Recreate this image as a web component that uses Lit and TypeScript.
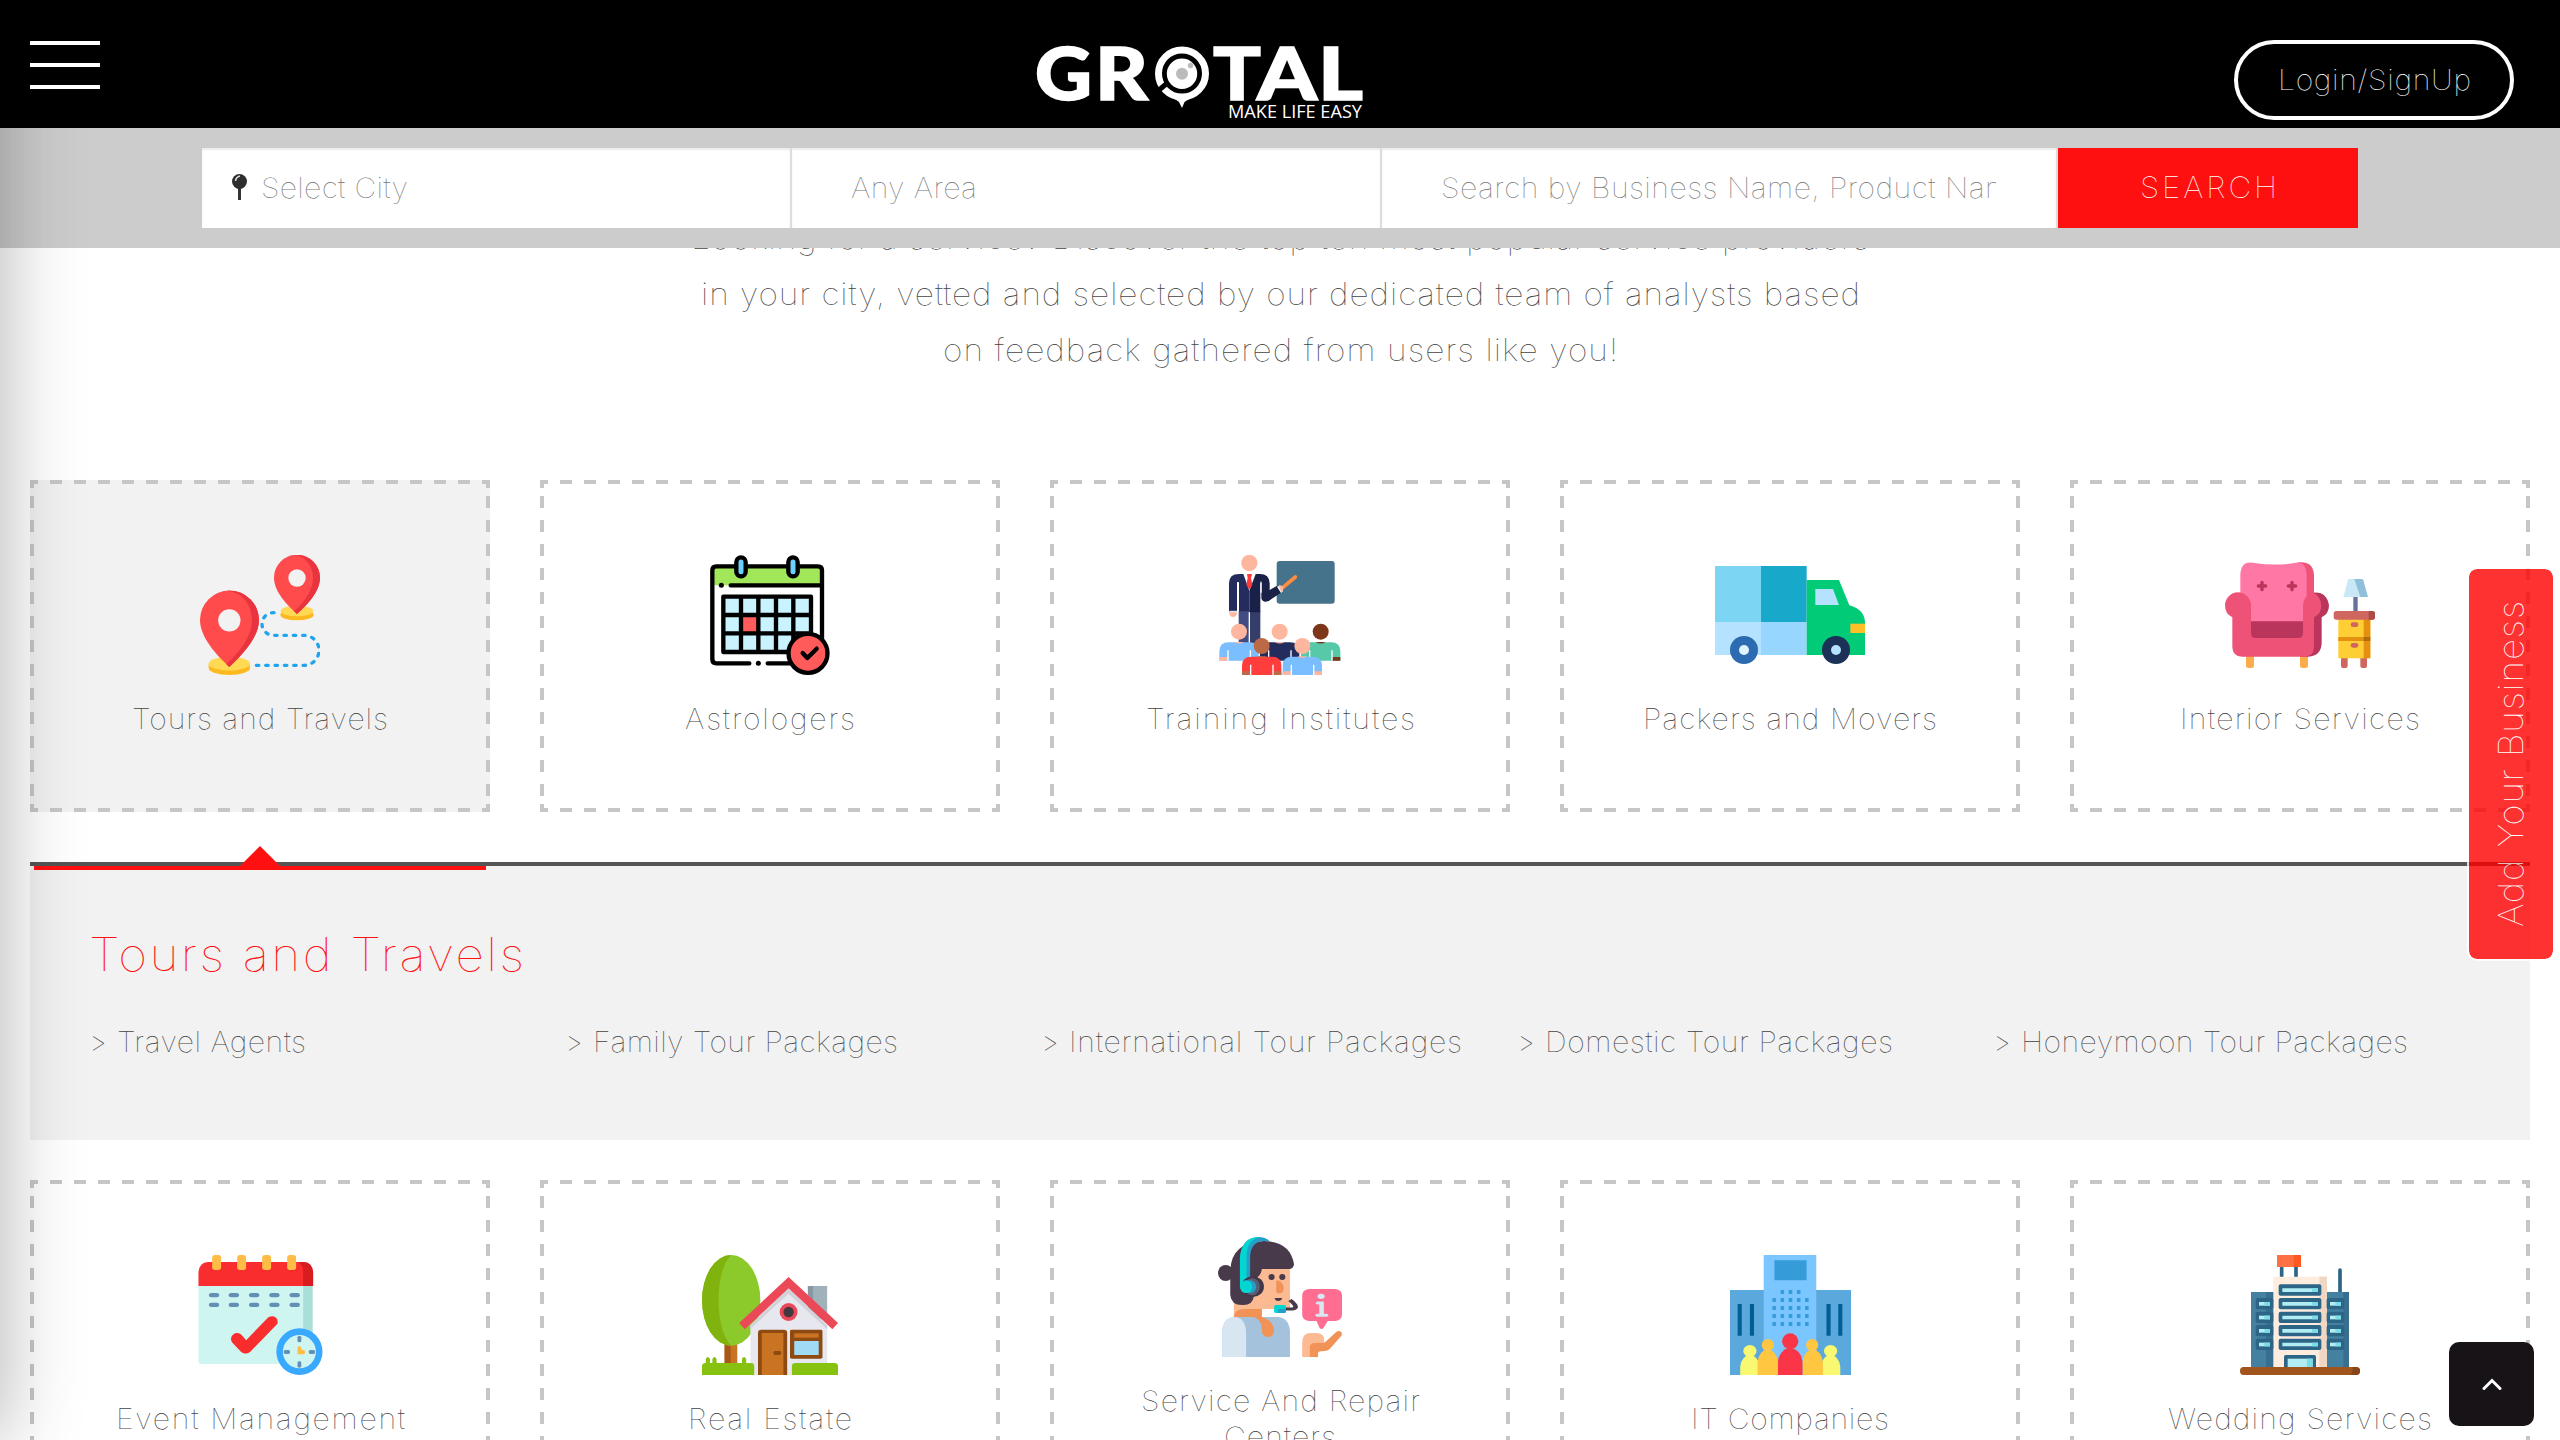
import { LitElement, html, css, svg } from "lit";
import { customElement, property } from "lit/decorators.js";
import { classMap } from "lit/directives/class-map.js";

/** Glyphs are drawn a little wider than the face's own width. */
const STRETCH = 1.08;

/** One line of text, tracked so that it fills a given measure. */
@customElement("tracked-text")
class TrackedText extends LitElement {
  @property() text = "";
  @property({ type: Number }) measure = 0;
  @property({ type: Boolean }) vertical = false;

  static styles = css`
    :host { display: inline-block; white-space: nowrap; }
    .line { display: inline-block; white-space: pre; transform-origin: 0 0; }
  `;

  protected updated() {
    const line = this.renderRoot.querySelector<HTMLElement>(".line")!;
    line.style.letterSpacing = "0px";
    line.style.marginInlineEnd = "0px";
    line.style.transform = "none";
    const box = line.getBoundingClientRect();
    const natural = Math.max(box.width, box.height);
    const tracking = (this.measure / STRETCH - natural) / Math.max(1, this.text.length - 1);
    line.style.letterSpacing = `${tracking}px`;
    line.style.marginInlineEnd = `${this.measure - this.measure / STRETCH - tracking}px`;
    line.style.transform = this.vertical ? `scaleY(${STRETCH})` : `scaleX(${STRETCH})`;
  }

  render() {
    return html`<span class="line">${this.text}</span>`;
  }
}

const toursIcon = svg`<svg width="120" height="120" viewBox="600 285 360 360">
  <path d="M822 458 h-2 a34 34 0 0 0 0 68 H912 a45 45 0 0 1 0 90 H765" fill="none" stroke="#1fa5ee" stroke-width="10" stroke-linecap="round" stroke-dasharray="7.5 20.5"/>
  <ellipse cx="688" cy="624" rx="62" ry="21" fill="#ffb920"/><rect x="626" y="611" width="124" height="13" fill="#ffb920"/>
  <ellipse cx="688" cy="611" rx="62" ry="21" fill="#ffd954"/>
  <ellipse cx="891" cy="464" rx="50" ry="17" fill="#ffb920"/><ellipse cx="891" cy="453" rx="49" ry="16" fill="#ffd954"/>
  <path d="M688 621C650 586 600 532 600 480a88 88 0 0 1 177 0c0 52-51 106-89 141z" fill="#ff4b4b"/>
  <path d="M688 392a88 88 0 0 1 89 88c0 52-51 106-89 141l-9-8c42-40 77-85 77-133 0-45-28-84-76-88z" fill="#e8343f"/>
  <circle cx="688" cy="481" r="33.500" fill="#f2f2f2"/>
  <path d="M891 462c-30-27-69-68-69-109a69 69 0 0 1 138 0c0 41-39 82-69 109z" fill="#ff4b4b"/>
  <path d="M882 285h9a69 69 0 0 1 69 68c0 41-39 82-69 109l-9-8c35-32 57-65 57-101 0-33-22-66-57-68z" fill="#e8343f"/>
  <circle cx="891" cy="354" r="26" fill="#f2f2f2"/>
</svg>`;

const calendarIcon = svg`<svg width="120" height="120" viewBox="150 75 360 360">
  <rect x="157" y="109" width="329" height="291" rx="12" fill="#fff"/>
  <path d="M157 121q0-12 12-12h305q12 0 12 12v45H157z" fill="#a2e65a"/>
  <path d="M268 400H169q-12 0-12-12V121q0-12 12-12h305q12 0 12 12V330M323 400h70M212 166h270" fill="none" stroke="#000" stroke-width="13" stroke-linecap="round"/>
  <circle cx="184" cy="166" r="7.500"/><circle cx="295" cy="400" r="7.500"/>
  <rect x="190" y="200" width="263" height="166" fill="#c8f3ff"/>
  <rect x="246" y="258" width="46" height="50" fill="#ff5b5b"/>
  <path d="M190 200h263v166H190zM243 200v166M295 200v166M348 200v166M400 200v166M190 255h263M190 310h263" fill="none" stroke="#000" stroke-width="13" stroke-linejoin="round"/>
  <g fill="#6cd0ff" stroke="#000" stroke-width="13"><rect x="229" y="82" width="28" height="57" rx="14"/><rect x="385" y="82" width="28" height="57" rx="14"/></g>
  <circle cx="444" cy="370" r="58.500" fill="#ff5b5b" stroke="#000" stroke-width="13"/>
  <path d="M428 369l14 15 28-28" fill="none" stroke="#000" stroke-width="13" stroke-linecap="round" stroke-linejoin="round"/>
</svg>`;

const pupil = (x: number, y: number, skin: string, shirt: string) => svg`
  <path d="M${x - 59} ${y + 87}v-28q0-27 28-27h62q28 0 28 27v28z" fill="${shirt}"/>
  <path d="M${x - 59} ${y + 76}h25v11h-25zM${x + 35} ${y + 76}h24v11h-24z" fill="${skin}"/>
  <path d="M${x - 33} ${y + 56}v31M${x + 34} ${y + 56}v31" stroke="#fff" stroke-width="4"/>
  <circle cx="${x}" cy="${y}" r="24" fill="${skin}"/><path d="M${x - 15} ${y + 31}q15 9 30 0z" fill="${skin}"/>`;

const trainingIcon = svg`<svg width="121.700" height="120" viewBox="178 75 365 360">
  <rect x="351" y="93" width="174" height="128" rx="9" fill="#46738c"/>
  <path d="M237 244h32v100h-32z" fill="#424c83"/><path d="M269 244h33v100h-33z" fill="#343e69"/><path d="M269 246v95" stroke="#fff" stroke-width="4"/>
  <path d="M208 245v-85q0-28 30-28h31v113h-31v-88h-6v88z" fill="#242c5e"/>
  <path d="M269 132h32q28 0 29 28v20l25-14 12 20-40 27q-18 7-22-8v-45h-3v87h-33z" fill="#1a2149"/>
  <path d="M235 157v86M304 155v33" stroke="#fff" stroke-width="4"/>
  <path d="M251 132h37l-19 50z" fill="#fff"/><path d="M262 132h15l-3 12 4 20-9 15-9-15 4-20z" fill="#ff3b3b"/>
  <path d="M209 247h23v3q-2 11-12 11t-11-11z" fill="#ffb69e"/><path d="M209 244h23" stroke="#fff" stroke-width="3"/>
  <path d="M352 170l9-4 9 18-6 5z" fill="#fff"/><path d="M370 172l37-31" stroke="#ff8b3d" stroke-width="11" stroke-linecap="round"/><path d="M357 167q14-3 14 8 0 10-6 13z" fill="#ffb69e"/>
  <circle cx="269" cy="99" r="24.500" fill="#ffb69e"/>
  ${pupil(360, 305, "#ffb69e", "#242c5e")}
  ${pupil(238, 305, "#ffb69e", "#7abeff")}
  ${pupil(483, 305, "#7d361a", "#57c8a8")}
  ${pupil(306, 348, "#bb6a45", "#ff3d3d")}
  ${pupil(428, 348, "#ffb69e", "#7abeff")}
</svg>`;

const truckIcon = svg`<svg width="150" height="120" viewBox="105 75 450 360">
  <path d="M105 108h138v168H105z" fill="#7bd5f3"/><path d="M243 108h137v168H243z" fill="#18a8ca"/>
  <path d="M105 276h138v99H105z" fill="#b5e2ff"/><path d="M243 276h137v99H243z" fill="#97d6ff"/>
  <path d="M380 150h97l31 76q47 12 47 54v95H380z" fill="#02cb77"/>
  <path d="M406 177h53l18 48h-71z" fill="#b5e2ff"/><path d="M511 281h44v28h-44z" fill="#ffbf29"/>
  <circle cx="192" cy="360" r="42" fill="#2d6bb0"/><circle cx="192" cy="360" r="15" fill="#dff3ff"/>
  <circle cx="468" cy="360" r="42" fill="#1b3157"/><circle cx="468" cy="360" r="15" fill="#b5e2ff"/>
</svg>`;

const interiorIcon = svg`<svg width="150" height="120" viewBox="135 75 450 360">
  <path d="M198 375h24v32q0 7-7 7h-10q-7 0-7-7zM360 375h24v32q0 7-7 7h-10q-7 0-7-7z" fill="#fdac4c"/>
  <path d="M355 97q47-5 47 42v80h-50z" fill="#ee5377"/>
  <path d="M181 280V134q2-42 37-36 75 12 140-1 22 5 22 40v145z" fill="#ff77a5"/>
  <path d="M400 188q40-4 47 38 0 26-22 36v78q-2 38-40 40h-25z" fill="#b9355c"/>
  <path d="M210 274h160v55H210z" fill="#b9355c"/>
  <path d="M135 226a39 39 0 0 1 78 0v84q0 14 14 14h128q14 0 14-14v-80q0-34 31-41 22 8 24 38 0 24-22 35v92q-2 24-26 26H186q-29-2-29-30v-88q-22-10-22-36z" fill="#ee5377"/>
  <path d="M246 157v22M235 168h22M336 157v22M325 168h22" stroke="#b9355c" stroke-width="10" stroke-linecap="round"/>
  <path d="M520 200h13v46h-13z" fill="#69719b"/><path d="M505 147h39l20 54h-74z" fill="#c8e8f7"/><path d="M523 147h21q5 0 6 4l14 50h-23z" fill="#90bfdb"/>
  <path d="M483 383h20v25q0 6-6 6h-8q-6 0-6-6zM541 383h20v25q0 6-6 6h-8q-6 0-6-6z" fill="#cf665f"/>
  <path d="M475 266h96v119h-96z" fill="#ffce34"/><path d="M551 266h20v119h-20zM475 321h96v12h-96z" fill="#e69012"/><path d="M551 321h20v12h-20z" fill="#b06d0e"/>
  <rect x="461" y="243" width="124" height="26" rx="8" fill="#cf665f"/><path d="M566 243h11q8 0 8 8v10q0 8-8 8h-11z" fill="#ad4c46"/>
  <rect x="512" y="277" width="23" height="14" rx="7" fill="#cf665f"/><rect x="512" y="339" width="23" height="14" rx="7" fill="#cf665f"/>
</svg>`;

const eventIcon = svg`<svg width="125" height="120" viewBox="101 105 265 360" preserveAspectRatio="none">
  <path d="M102 198h242v234H107q-5 0-5-7z" fill="#cff5f0"/><path d="M324 198h20v160h-20z" fill="#a8e0d9"/>
  <path d="M102 198v-42q2-28 20-30h203q18 2 20 30v42z" fill="#fa2d2e"/><path d="M312 126h13q18 2 20 30v42h-21v-46q-1-20-12-26z" fill="#d81c20"/>
  <g fill="#ffbc47">${[131, 184, 237, 290].map((x) => svg`<rect x="${x}" y="105" width="19" height="45" rx="6" ry="8"/>`)}</g>
  <g fill="#638fb5">${[124, 166, 209, 252, 295].map((x) => svg`<rect x="${x}" y="219" width="22" height="13" rx="5" ry="6"/><rect x="${x}" y="248" width="22" height="13" rx="5" ry="6"/>`)}</g>
  <path d="M171 358c0-18 15-26 23-12l9 15 44-65c10-16 27-4 22 16l-57 83q-10 11-20 0l-18-27q-3-5-3-10z" fill="#fa2d2e"/>
  <ellipse cx="316" cy="395" rx="49" ry="70" fill="#39a9ff"/><ellipse cx="316" cy="395" rx="35" ry="50" fill="#cff5f0"/>
  <g fill="#638fb5"><rect x="312" y="348" width="8" height="19" rx="4"/><rect x="312" y="424" width="8" height="19" rx="4"/><rect x="283" y="390" width="13" height="12" rx="4"/><rect x="336" y="390" width="13" height="12" rx="4"/></g>
  <path d="M312 382q4-6 8 0v8h6q4 6 0 13h-14z" fill="#ffbc47"/>
</svg>`;

const estateIcon = svg`<svg width="136" height="120" viewBox="1169 105 289 360" preserveAspectRatio="none">
  <path d="M1217 370h27v60h-27z" fill="#c97423"/><path d="M1217 370h13v60h-13z" fill="#a75718"/>
  <ellipse cx="1231" cy="241" rx="62" ry="136" fill="#8cc92a"/>
  <path d="M1231 105a62 136 0 0 0 0 272c-36-50-36-222 0-272z" fill="#80b30d"/>
  <path d="M1394 198h41v100h-41z" fill="#a0b1ba"/><path d="M1394 198h11v80h-11z" fill="#8699a3"/>
  <path d="M1353 205l82 115v145h-163V320z" fill="#e7e8ef"/>
  <path d="M1353 204l82 112v12l-82-107-82 107v-12z" fill="#d2d3d9"/>
  <path d="M1353 171l105 138-12 19-93-123-93 123-12-19z" fill="#eb4858"/>
  <ellipse cx="1353" cy="276" rx="19" ry="27" fill="#eb4858"/><ellipse cx="1353" cy="276" rx="11" ry="16" fill="#433840"/>
  <path d="M1169 465v-26q0-10 8-10v-12q4-12 9 0v12h5v-12q5-12 9 0v12h54v-12q4-12 9 0v12h10q7 0 7 10v26zM1360 465v-26q0-10 8-10h82q8 0 8 10v26z" fill="#86c20f"/>
  <path d="M1288 465V338q0-9 7-9h48q7 0 7 9v127z" fill="#8e4a11"/><path d="M1296 339h46v126h-46z" fill="#c97423"/><rect x="1321" y="393" width="16" height="12" rx="4" fill="#8e4a11"/>
  <rect x="1356" y="329" width="69" height="87" rx="4" fill="#8e4a11"/><path d="M1365 340h52v13h-52z" fill="#c97423"/><path d="M1365 363h52v42h-52z" fill="#a0dbf5"/>
</svg>`;

const supportIcon = svg`<svg width="124" height="120" viewBox="192 81 243 360" preserveAspectRatio="none">
  <ellipse cx="207" cy="189" rx="15" ry="24" fill="#483a4b"/>
  <path d="M223 260h55v75h-55z" fill="#fbba91"/><path d="M223 325q0-28 22-28h33v30z" fill="#f19357"/>
  <path d="M254 170h79v127h-79z" fill="#fbba91"/>
  <path d="M216 180q3-84 66-87 52 2 59 70-1 14-10 14h-53q-2 25-16 28v55q-2 24-20 25-24 2-26-30z" fill="#483a4b"/>
  <path d="M235 226V142q4-60 36-61 14 0 22 12h-12q-24 2-26 45v100z" fill="#249fc9"/>
  <path d="M235 230V142q4-60 36-61h4q-26 8-27 56v95z" fill="#03d6d2"/>
  <ellipse cx="260" cy="230" rx="22" ry="31" fill="#413649"/><ellipse cx="259" cy="230" rx="15" ry="26" fill="#5b5e71"/><ellipse cx="254" cy="230" rx="13" ry="19" fill="#249fc9"/><ellipse cx="247" cy="230" rx="12" ry="19" fill="#03d6d2"/>
  <ellipse cx="297" cy="201" rx="6" ry="9" fill="#483a4b"/><ellipse cx="318" cy="201" rx="6" ry="9" fill="#483a4b"/>
  <path d="M306 212q11-4 15 22 0 16-9 16-6 0-6-8z" fill="#f19357"/><path d="M303 264h15q-2 9-8 9t-7-9z" fill="#483a4b"/>
  <path d="M333 270q20 24 4 27h-14" fill="none" stroke="#483a4b" stroke-width="9"/>
  <rect x="302" y="285" width="23" height="24" rx="4" fill="#03d6d2"/><path d="M310 297h15v8q0 4-4 4h-11z" fill="#249fc9"/>
  <path d="M200 441v-78q2-40 26-42h82q23 2 25 42v78z" fill="#a5c2dc"/><path d="M200 441v-78q2-40 24-42 21 2 23 42v78z" fill="#d7e6f1"/>
  <path d="M262 321h16q24 10 24 46-3 14-12 14t-12-14q1-38-16-46z" fill="#f19357"/>
  <path d="M370 237h52q13 2 13 20v56q0 18-13 20h-15l-8 20q-4 8-8 0l-6-20h-15q-13-2-13-20v-56q0-18 13-20z" fill="#ff6d90"/>
  <ellipse cx="394" cy="259" rx="7" ry="8" fill="#d7e6f1"/><path d="M388 279h7v36M387 316h17" fill="none" stroke="#d7e6f1" stroke-width="9" stroke-linecap="round"/>
  <path d="M357 441v-45q1-27 16-27h13q14 2 14 20v52z" fill="#fbba91"/><path d="M400 365h30v76h-42v-17h12z" fill="#fff"/>
  <path d="M372 441v-28q0-14 10-14h15q4 0 7-5l18-26q6-10 12-1 2 6-1 12l-22 38q-4 6-10 6h-6q-7 1-7 8v10z" fill="#f19357"/>
</svg>`;

const windowDots = [294, 310, 326].map((x) => svg`<rect x="${x}" y="240" width="7" height="12"/>`);
const windowGrid = [264, 288, 312, 336].map((y) => [278, 294, 310, 326, 342].map((x) => svg`<rect x="${x}" y="${y}" width="7" height="12"/>`));

const officeIcon = svg`<svg width="121" height="120" viewBox="195 135 237 360" preserveAspectRatio="none">
  <path d="M195 240h237v255H195z" fill="#5ba8dd"/><path d="M261 135h103v360H261z" fill="#7cc6ff"/><path d="M282 151h63v60h-63z" fill="#359cd9"/>
  <g fill="#359cd9">${windowDots}${windowGrid}</g>
  <path d="M214 282v95M238 282v95M388 282v95M411 282v95" stroke="#005f92" stroke-width="8"/>
  <g fill="#f9f871"><ellipse cx="234" cy="423" rx="13" ry="18"/><path d="M215 495v-25q2-32 19-36 17 4 19 36v25z"/><ellipse cx="392" cy="423" rx="13" ry="18"/><path d="M373 495v-25q2-32 19-36 17 4 19 36v25z"/></g>
  <g fill="#ffc642"><ellipse cx="269" cy="405" rx="12" ry="18"/><path d="M249 495v-38q2-34 20-39 18 5 20 39v38z"/><ellipse cx="356" cy="405" rx="12" ry="18"/><path d="M337 495v-38q2-34 20-39 18 5 20 39v38z"/></g>
  <g fill="#fa3548"><ellipse cx="313" cy="394" rx="16" ry="24"/><path d="M289 495v-40q2-36 24-42 22 6 24 42v40z"/></g>
</svg>`;

const hotelIcon = svg`<svg width="120" height="120" viewBox="330 105 360 360">
  <path d="M455 138v40M498 138v40M630 150v75" stroke="#2c6586" stroke-width="11" stroke-linecap="round"/>
  <path d="M441 105h72v36h-72z" fill="#ff7145"/><path d="M491 105h22v36h-22z" fill="#ff5722"/>
  <path d="M363 216h294v228H363z" fill="#44809f"/><path d="M408 216h24v228h-24zM640 216h17v228h-17z" fill="#386f91"/>
  <path d="M430 170h161v274H430z" fill="#feeddf"/><path d="M568 170h23v274h-23z" fill="#f0d7c3"/>
  ${[210, 251, 292, 332, 373].map((y) => svg`<rect x="446" y="${y - 17}" width="128" height="34" rx="6" fill="#2c6586"/><path d="M457 ${y - 5}h107v11H457z" fill="#b1edf2"/><path d="M546 ${y - 5}h18v11h-18z" fill="#7bdde8"/>`)}
  ${[251, 292, 332, 373].map((y) => [377, 590].map((x) => svg`<rect x="${x}" y="${y - 17}" width="53" height="34" rx="6" fill="#2c6586"/><path d="M${x + 10} ${y - 5}h33v11h-33z" fill="#b1edf2"/><path d="M${x + 26} ${y - 5}h17v11h-17z" fill="#7bdde8"/>`))}
  <rect x="462" y="405" width="96" height="44" rx="5" fill="#2c6586"/><path d="M473 416h75v28h-75z" fill="#b1edf2"/><path d="M531 416h17v28h-17z" fill="#7bdde8"/>
  <rect x="330" y="441" width="360" height="24" rx="11" fill="#a1541b"/><path d="M660 465q10-8 8-24h11q11 2 11 12t-11 12z" fill="#87451a"/>
</svg>`;

interface Category { lines: [string, number][]; icon: unknown; active?: boolean; }

const firstRow: Category[] = [
  { lines: [["Tours and Travels", 256]], icon: toursIcon, active: true },
  { lines: [["Astrologers", 170]], icon: calendarIcon },
  { lines: [["Training Institutes", 269]], icon: trainingIcon },
  { lines: [["Packers and Movers", 294]], icon: truckIcon },
  { lines: [["Interior Services", 240]], icon: interiorIcon },
];
const secondRow: Category[] = [
  { lines: [["Event Management", 289]], icon: eventIcon },
  { lines: [["Real Estate", 164]], icon: estateIcon },
  { lines: [["Service And Repair", 279], ["Centers", 112]], icon: supportIcon },
  { lines: [["IT Companies", 198]], icon: officeIcon },
  { lines: [["Wedding Services", 264]], icon: hotelIcon },
];
const links: [string, number][] = [
  ["Travel Agents", 189],
  ["Family Tour Packages", 305],
  ["International Tour Packages", 393],
  ["Domestic Tour Packages", 348],
  ["Honeymoon Tour Packages", 387],
];
const intro: [string, number][] = [
  ["Looking for a service? Discover the top ten most popular service providers", 1178],
  ["in your city, vetted and selected by our dedicated team of analysts based", 1159],
  ["on feedback gathered from users like you!", 675],
];

const tracked = ([text, measure]: [string, number]) =>
  html`<tracked-text .text=${text} .measure=${measure}></tracked-text>`;

@customElement("app-root")
class AppRoot extends LitElement {
  static styles = css`
    :host { display: block; position: relative; height: 1440px; overflow: hidden; background: #fff; color: #444; font: 100 28px/36px Inter, Lato, "Liberation Sans", sans-serif; }
    * { box-sizing: border-box; }
    svg { display: block; }
    .top { position: relative; z-index: 5; height: 128px; background: #000; display: flex; padding: 0 46px 0 30px; }
    .burger { width: 70px; margin-top: 41px; display: flex; flex-direction: column; gap: 18px; }
    .bar { height: 4px; background: #fff; }
    .logo { margin: 40px 0 0 937px; overflow: visible; }
    .login { margin-left: auto; margin-top: 40px; width: 280px; height: 80px; border: 4px solid #fff; border-radius: 40px; color: #fff; display: flex; align-items: center; justify-content: center; }
    .finder { position: relative; z-index: 3; height: 120px; background: #ccc; display: flex; padding: 20px 202px; color: #777; }
    .field { height: 80px; background: #fff; border-right: 2px solid #ddd; box-shadow: inset 0 2px 2px rgba(0,0,0,.08); display: flex; align-items: center; padding: 0 60px 0 59px; }
    .city { width: 590px; padding-left: 29px; gap: 13px; }
    .area { width: 590px; }
    .query { width: 676px; }
    .clip { overflow: hidden; width: 100%; display: flex; }
    .go { width: 300px; height: 80px; background: #ff1010; color: #fff; font-size: 29px; display: flex; align-items: center; justify-content: center; }
    .edge { position: absolute; z-index: 4; left: -300px; top: 0; width: 300px; height: 1440px; box-shadow: 0 0 76px rgba(0,0,0,.31); }
    .intro { margin: -38px 0 102px; display: flex; flex-direction: column; align-items: center; font-size: 31px; line-height: 56px; }
    .row { display: grid; grid-template-columns: repeat(5, 460px); gap: 50px; padding: 0 30px; }
    .card { --dash: #c6c6c6; height: 332px; display: flex; flex-direction: column; align-items: center; justify-content: center; gap: 26px;
      background:
        linear-gradient(90deg, var(--dash) 12px, transparent 12px) 20px 0 / 24px 4px repeat-x,
        linear-gradient(90deg, var(--dash) 12px, transparent 12px) 20px 100% / 24px 4px repeat-x,
        linear-gradient(var(--dash) 12px, transparent 12px) 0 16px / 4px 24px repeat-y,
        linear-gradient(var(--dash) 12px, transparent 12px) 100% 16px / 4px 24px repeat-y,
        linear-gradient(var(--dash), var(--dash)) 0 0 / 4px 8px no-repeat,
        linear-gradient(var(--dash), var(--dash)) 100% 0 / 4px 8px no-repeat,
        linear-gradient(var(--dash), var(--dash)) 0 100% / 4px 8px no-repeat,
        linear-gradient(var(--dash), var(--dash)) 100% 100% / 4px 8px no-repeat; }
    .active { background-color: #f2f2f2; }
    .label { display: flex; flex-direction: column; align-items: center; }
    .panel { position: relative; margin: 50px 30px 40px; height: 278px; background: #f2f2f2; border-top: 4px solid #555; padding: 60px 59px 0; }
    .mark { position: absolute; left: 4px; top: 0; width: 452px; height: 4px; background: #ff1010; }
    .arrow { position: absolute; left: 210px; top: -20px; width: 40px; height: 20px; background: #ff1010; clip-path: polygon(50% 0, 100% 100%, 0 100%); }
    .title { margin: 0; font-size: 46px; line-height: 56px; font-weight: 100; color: #ff1010; }
    .links { display: grid; grid-template-columns: repeat(5, 476px); margin-top: 42px; }
    .link { display: flex; gap: 11px; white-space: nowrap; }
    .chev { width: 17px; }
    .add { position: absolute; z-index: 6; left: 2467px; top: 567px; width: 88px; height: 394px; border: 2px solid #fff; border-radius: 10px; background: red; background-clip: padding-box; opacity: .8; color: #fff; font-size: 34px; display: flex; align-items: center; justify-content: center; writing-mode: vertical-rl; transform: rotate(180deg); }
    .up { position: absolute; z-index: 6; left: 2449px; top: 1342px; width: 85px; height: 84px; border-radius: 10px; background: #181316; display: grid; place-items: center; }
    .word { font: 900 72px Lato, sans-serif; fill: #fff; stroke: #fff; stroke-width: 1.5px; }
    .motto { font: 500 17.500px "Open Sans", sans-serif; fill: #fff; }
  `;

  private card(c: Category) {
    return html`<div class=${classMap({ card: true, active: !!c.active })}>
      ${c.icon}
      <div class="label">${c.lines.map(tracked)}</div>
    </div>`;
  }

  render() {
    return html`
      <header class="top">
        <div class="burger"><div class="bar"></div><div class="bar"></div><div class="bar"></div></div>
        <svg class="logo" width="326" height="84" viewBox="1037 40 326 84">
          <text class="word" x="1035" y="99.500" textLength="57" lengthAdjust="spacingAndGlyphs">G</text>
          <text class="word" x="1095" y="99.500" textLength="53" lengthAdjust="spacingAndGlyphs">R</text>
          <text class="word" x="1213" y="99.500" textLength="48" lengthAdjust="spacingAndGlyphs">T</text>
          <text class="word" x="1257" y="99.500" textLength="60" lengthAdjust="spacingAndGlyphs">A</text>
          <text class="word" x="1318" y="99.500" textLength="45" lengthAdjust="spacingAndGlyphs">L</text>
          <circle cx="1182" cy="73.500" r="23.500" fill="none" stroke="#fff" stroke-width="7"/>
          <path d="M1175 99h14l-4.500 3-2.500 6-3-6z" fill="#fff"/>
          <path d="M1171 80l-12 10" stroke="#000" stroke-width="5"/>
          <circle cx="1182" cy="73.700" r="15.200" fill="#fff"/>
          <circle cx="1182" cy="73.700" r="6" fill="#bbb"/><circle cx="1190.500" cy="65.500" r="2.700" fill="#bbb"/>
          <text class="motto" x="1228" y="118" textLength="134" lengthAdjust="spacingAndGlyphs">MAKE LIFE EASY</text>
        </svg>
        <div class="login">${tracked(["Login/SignUp", 193])}</div>
      </header>
      <div class="finder">
        <div class="field city">
          <svg width="17" height="30" viewBox="0 0 17 30"><path d="M8.500 15v12" stroke="#333" stroke-width="3"/><circle cx="8.500" cy="8.500" r="7.500" fill="#2e2e2e"/><path d="M4.500 8q.5-4 4.500-5" fill="none" stroke="#ddd" stroke-width="1.500"/></svg>
          ${tracked(["Select City", 147])}
        </div>
        <div class="field area">${tracked(["Any Area", 126])}</div>
        <div class="field query"><div class="clip">${tracked(["Search by Business Name, Product Name", 588])}</div></div>
        <div class="go">${tracked(["SEARCH", 137])}</div>
      </div>
      <div class="edge"></div>
      <div class="intro">${intro.map(tracked)}</div>
      <div class="row">${firstRow.map((c) => this.card(c))}</div>
      <section class="panel">
        <div class="arrow"></div><div class="mark"></div>
        <h2 class="title">${tracked(["Tours and Travels", 435])}</h2>
        <div class="links">${links.map((l) => html`<div class="link"><span class="chev">&gt;</span>${tracked(l)}</div>`)}</div>
      </section>
      <div class="row">${secondRow.map((c) => this.card(c))}</div>
      <div class="add"><tracked-text vertical .text=${"Add Your Business"} .measure=${326}></tracked-text></div>
      <div class="up"><svg width="20" height="14" viewBox="0 0 20 14"><path d="M2 11.500l8-8 8 8" fill="none" stroke="#fff" stroke-width="3" stroke-linecap="round"/></svg></div>
    `;
  }
}
